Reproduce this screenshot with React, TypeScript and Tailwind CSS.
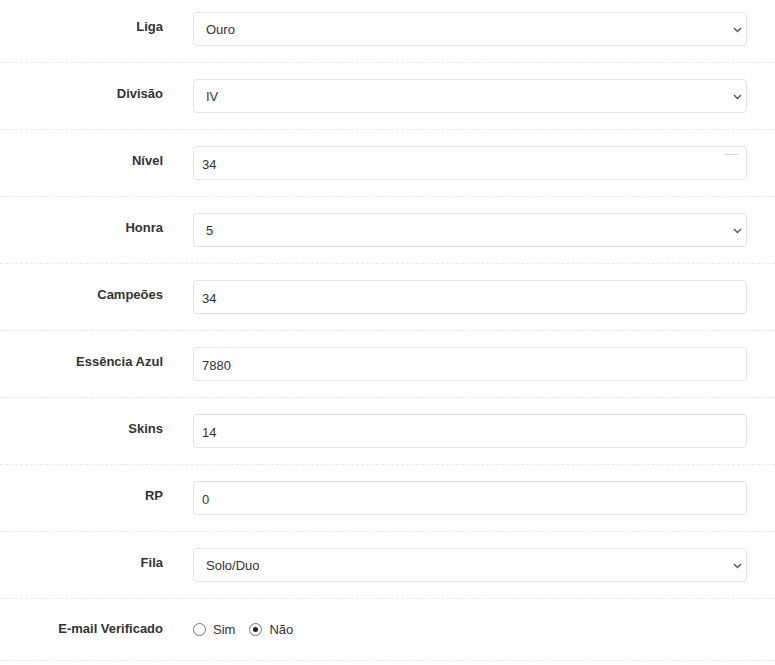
import { useState } from "react";

type Field =
  | { label: string; kind: "select"; value: string; options: string[] }
  | { label: string; kind: "number"; value: string }
  | { label: string; kind: "text"; value: string };

const FIELDS: Field[] = [
  { label: "Liga", kind: "select", value: "Ouro", options: ["Ferro", "Bronze", "Prata", "Ouro", "Platina", "Diamante"] },
  { label: "Divisão", kind: "select", value: "IV", options: ["I", "II", "III", "IV"] },
  { label: "Nível", kind: "number", value: "34" },
  { label: "Honra", kind: "select", value: "5", options: ["0", "1", "2", "3", "4", "5"] },
  { label: "Campeões", kind: "text", value: "34" },
  { label: "Essência Azul", kind: "text", value: "7880" },
  { label: "Skins", kind: "text", value: "14" },
  { label: "RP", kind: "text", value: "0" },
  { label: "Fila", kind: "select", value: "Solo/Duo", options: ["Solo/Duo", "Flex"] },
];

const inputCls =
  "w-full h-[34px] rounded-[4px] border border-[#dfe3e3] bg-white pt-[2px] text-[13px] text-[#333] outline-none";

function Chevron() {
  return (
    <svg
      className="pointer-events-none absolute right-[5px] top-[15px]"
      width="9"
      height="6"
      viewBox="0 0 9 6"
      fill="none"
    >
      <path d="M1 1l3.5 3.5L8 1" stroke="#555" strokeWidth="1.4" />
    </svg>
  );
}

function Radio({ checked, label, onClick }: { checked: boolean; label: string; onClick: () => void }) {
  return (
    <button type="button" onClick={onClick} className="flex items-center gap-[7px]">
      <span className="flex h-[13px] w-[13px] items-center justify-center rounded-full border border-[#767676] bg-white">
        {checked && <span className="h-[5px] w-[5px] rounded-full bg-[#222]" />}
      </span>
      <span className="text-[13px] text-[#333]">{label}</span>
    </button>
  );
}

export default function App() {
  const [values, setValues] = useState<Record<string, string>>(
    Object.fromEntries(FIELDS.map((f) => [f.label, f.value]))
  );
  const [verified, setVerified] = useState(false);

  const set = (k: string, v: string) => setValues((s) => ({ ...s, [k]: v }));

  return (
    <div className="min-h-[665px] w-full bg-white font-['Liberation_Sans',Arial,sans-serif]">
      {FIELDS.map((f, i) => (
        <div
          key={f.label}
          className={`flex items-start border-b border-dashed border-[#e8e8e8] pb-4 ${i === 0 ? "pt-3" : "pt-4"}`}
        >
          <label className="w-[163px] shrink-0 pt-[5px] text-right text-[13px] font-bold leading-5 text-[#333]">
            {f.label}
          </label>
          <div className="relative ml-[30px] mr-[28px] flex-1">
            {f.kind === "select" ? (
              <>
                <select
                  value={values[f.label]}
                  onChange={(e) => set(f.label, e.target.value)}
                  className={`${inputCls} appearance-none pl-[12px]`}
                >
                  {f.options.map((o) => (
                    <option key={o}>{o}</option>
                  ))}
                </select>
                <Chevron />
              </>
            ) : (
              <>
                <input
                  type="text"
                  value={values[f.label]}
                  onChange={(e) => set(f.label, e.target.value)}
                  className={`${inputCls} pl-[8px]`}
                />
                {f.kind === "number" && (
                  <span className="pointer-events-none absolute right-[9px] top-[8px] h-px w-[13px] bg-[#d8d8d8]" />
                )}
              </>
            )}
          </div>
        </div>
      ))}

      <div className="flex items-start border-b border-dashed border-[#e8e8e8] pb-4 pt-4">
        <label className="w-[163px] shrink-0 pt-[4px] text-right text-[13px] font-bold leading-5 text-[#333]">
          E-mail Verificado
        </label>
        <div className="ml-[30px] flex h-[29px] items-center gap-[14px]">
          <Radio checked={verified} label="Sim" onClick={() => setVerified(true)} />
          <Radio checked={!verified} label="Não" onClick={() => setVerified(false)} />
        </div>
      </div>
    </div>
  );
}
